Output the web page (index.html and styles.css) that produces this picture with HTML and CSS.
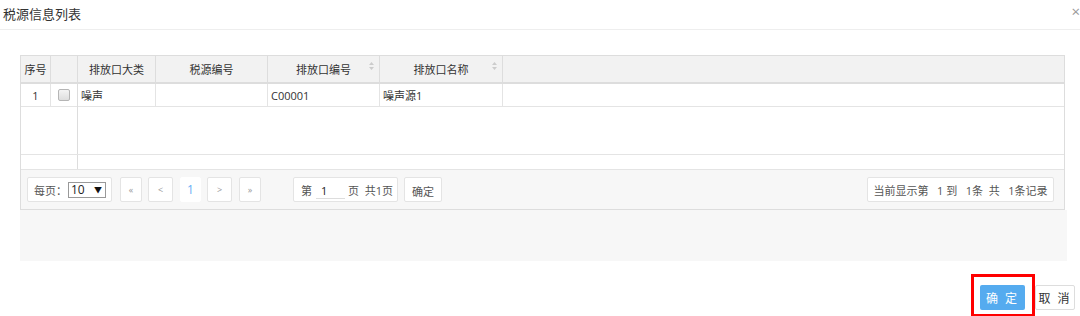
FILE: index.html
```html
<!DOCTYPE html>
<html lang="zh-CN">
<head>
    <meta charset="UTF-8">
    <meta name="viewport" content="width=device-width, initial-scale=1.0">
    <title>税源信息列表</title>
    <link rel="stylesheet" href="styles.css">
</head>
<body>
    <div class="dialog">
        <div class="dialog-head">
            <span class="dialog-title">税源信息列表</span>
            <span class="dialog-close">×</span>
        </div>

        <div class="dialog-body">
            <div class="grid">
                <div class="grid-head">
                    <div class="frozen">
                        <div class="cell c-no">序号</div>
                        <div class="cell c-chk"></div>
                    </div>
                    <div class="main">
                        <div class="cell c-type">排放口大类</div>
                        <div class="cell c-code">税源编号</div>
                        <div class="cell c-outlet sortable">排放口编号<svg class="sort" width="5" height="8" viewBox="0 0 5 8"><path d="M2.5 0L5 3H0z M2.5 8L0 5h5z" fill="#ccc"/></svg></div>
                        <div class="cell c-name sortable">排放口名称<svg class="sort" width="5" height="8" viewBox="0 0 5 8"><path d="M2.5 0L5 3H0z M2.5 8L0 5h5z" fill="#ccc"/></svg></div>
                        <div class="cell c-rest"></div>
                    </div>
                </div>

                <div class="grid-body">
                    <div class="frozen">
                        <div class="row">
                            <div class="cell c-no">1</div>
                            <div class="cell c-chk"><span class="checkbox"></span></div>
                        </div>
                    </div>
                    <div class="main">
                        <div class="row">
                            <div class="cell c-type left">噪声</div>
                            <div class="cell c-code left"></div>
                            <div class="cell c-outlet left">C00001</div>
                            <div class="cell c-name left">噪声源1</div>
                            <div class="cell c-rest"></div>
                        </div>
                    </div>
                </div>

                <div class="grid-scroll">
                    <div class="frozen"></div>
                </div>

                <div class="pager">
                    <div class="pg-box page-size">每页：<span class="select">10<span class="caret">▼</span></span></div>
                    <span class="pg-btn first">«</span>
                    <span class="pg-btn prev">&lt;</span>
                    <span class="pg-num">1</span>
                    <span class="pg-btn next">&gt;</span>
                    <span class="pg-btn last">»</span>
                    <div class="pg-box page-jump">第<span class="page-input">1</span>页&nbsp;&nbsp;共1页</div>
                    <span class="pg-box go-btn">确定</span>
                    <div class="pg-box page-info">当前显示第&nbsp;&nbsp;&nbsp;1 到&nbsp;&nbsp;&nbsp;1条&nbsp;&nbsp;共&nbsp;&nbsp;&nbsp;1条记录</div>
                </div>
            </div>
            <div class="grid-foot"></div>
        </div>

        <div class="dialog-foot">
            <div class="mark">
                <button class="btn btn-primary">确 定</button>
            </div>
            <button class="btn btn-default">取 消</button>
        </div>
    </div>
</body>
</html>
```

FILE: styles.css
```css
* {
    margin: 0;
    padding: 0;
    box-sizing: border-box;
    font-family: 'Open Sans', 'Noto Sans CJK SC', sans-serif;
}

body {
    background: white;
    color: #333;
    overflow: hidden;
}

.dialog {
    width: 1080px;
    height: 316px;
    overflow: hidden;
}

.dialog-head {
    height: 30px;
    display: flex;
    justify-content: space-between;
    align-items: center;
    padding-left: 3px;
    border-bottom: 1px solid #eee;
}

.dialog-title {
    font-size: 13px;
    line-height: 29px;
}

.dialog-close {
    font-size: 15px;
    line-height: 15px;
    color: #999;
    margin-right: 0;
    margin-top: -6px;
}

.dialog-body {
    padding: 25px 15px 0 20px;
}

.grid {
    border: 1px solid #ddd;
    font-size: 11px;
}

.grid-head, .grid-body, .row {
    display: flex;
}

.grid-head {
    height: 28px;
    background: #f2f2f2;
    border-bottom: 2px solid #ddd;
}

.frozen {
    display: flex;
    flex-direction: column;
    width: 57px;
    border-right: 1px solid #ddd;
}

.grid-head .frozen {
    flex-direction: row;
}

.main {
    flex: 1;
    display: flex;
    flex-direction: column;
}

.grid-head .main {
    flex-direction: row;
}

.cell {
    display: flex;
    align-items: center;
    justify-content: center;
    border-right: 1px solid #e4e4e4;
    white-space: nowrap;
    position: relative;
}

.grid-head .cell {
    border-right-color: #ddd;
}

.cell.left {
    justify-content: flex-start;
    padding-left: 3px;
}

.c-no { width: 30px; }
.c-chk { width: 26px; border-right: none; }
.c-type { width: 78px; }
.c-code { width: 112px; }
.c-outlet { width: 112px; }
.c-name { width: 123px; }
.c-rest { flex: 1; border-right: none; }

.sort {
    position: absolute;
    right: 5px;
    top: 6px;
}

.grid-body {
    height: 71px;
    border-bottom: 1px solid #e4e4e4;
}

.row {
    height: 23px;
    border-bottom: 1px solid #e4e4e4;
}

.checkbox {
    width: 12px;
    height: 12px;
    border: 1px solid #b5b5b5;
    border-radius: 2px;
    background: linear-gradient(#f4f4f4, #dedede);
}

.grid-scroll {
    height: 15px;
    display: flex;
    border-bottom: 1px solid #e4e4e4;
}

.pager {
    height: 39px;
    display: flex;
    align-items: center;
    padding: 0 10px 0 6px;
    background: #f7f7f7;
    color: #555;
    white-space: nowrap;
}

.pg-box, .pg-btn, .pg-num {
    height: 25px;
    display: flex;
    align-items: center;
    justify-content: center;
    background: white;
    border: 1px solid #e4e4e4;
    border-radius: 2px;
    flex-shrink: 0;
}

.page-size {
    width: 85px;
    padding-left: 6px;
    justify-content: flex-start;
}

.select {
    width: 38px;
    height: 16px;
    margin-left: 1px;
    border: 1px solid #999;
    display: flex;
    align-items: center;
    justify-content: space-between;
    padding: 0 3px 0 2px;
    font-size: 12px;
    color: #222;
}

.caret {
    font-size: 8px;
    color: #111;
}

.pg-btn {
    font-size: 9px;
    color: #999;
}

.first { width: 22px; margin-left: 8px; }
.prev { width: 25px; margin-left: 6px; }
.next { width: 25px; margin-left: 6px; }
.last { width: 22px; margin-left: 7px; }

.pg-num {
    width: 21px;
    margin-left: 7px;
    border-color: white;
    color: #6aaef5;
    font-size: 12px;
}

.page-jump {
    width: 105px;
    margin-left: 32px;
    justify-content: flex-start;
    padding-left: 7px;
}

.page-input {
    width: 29px;
    margin: 2px 3px 0 4px;
    padding-left: 5px;
    border-bottom: 1px solid #ddd;
    color: #222;
}

.go-btn {
    width: 38px;
    margin-left: 6px;
    padding-top: 2px;
}

.page-info {
    width: 187px;
    margin-left: auto;
}

.grid-foot {
    height: 51px;
    background: #f7f7f7;
    margin-right: -2px;
}

.dialog-foot {
    display: flex;
    justify-content: flex-end;
    padding-right: 5px;
    margin-top: 13px;
}

.mark {
    width: 64px;
    height: 43px;
    border: 3px solid #f00;
    padding: 8px 0 0 6px;
}

.btn {
    height: 25px;
    font-size: 12px;
    border-radius: 2px;
    cursor: pointer;
}

.btn-primary {
    width: 45px;
    background: #55abef;
    color: white;
    border: none;
    letter-spacing: 2px;
}

.btn-default {
    width: 40px;
    margin-top: 11px;
    background: white;
    color: #333;
    border: 1px solid #ddd;
    letter-spacing: 2px;
}
```
